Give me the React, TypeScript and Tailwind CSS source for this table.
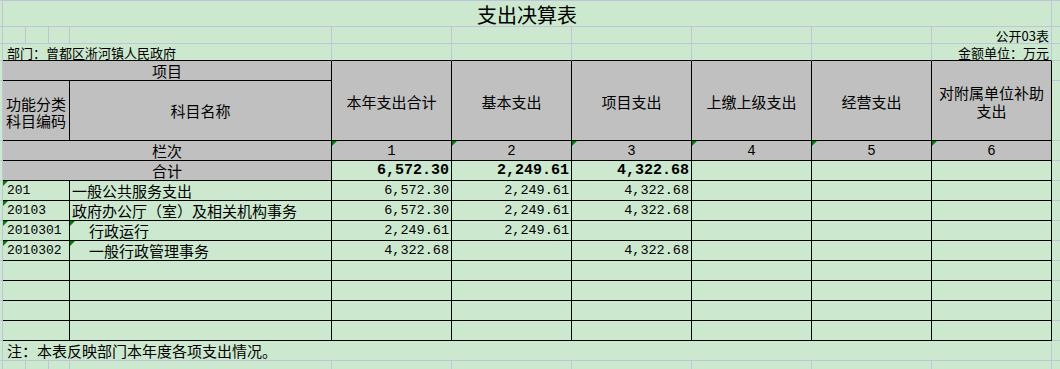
import * as React from "react"

type Row = {
  code: string
  name: string
  indent?: boolean
  vals: string[]
}

const rows: Row[] = [
  { code: "201", name: "一般公共服务支出", vals: ["6,572.30", "2,249.61", "4,322.68"] },
  { code: "20103", name: "政府办公厅（室）及相关机构事务", vals: ["6,572.30", "2,249.61", "4,322.68"] },
  { code: "2010301", name: "行政运行", indent: true, vals: ["2,249.61", "2,249.61", ""] },
  { code: "2010302", name: "一般行政管理事务", indent: true, vals: ["4,322.68", "", "4,322.68"] },
  { code: "", name: "", vals: [] },
  { code: "", name: "", vals: [] },
  { code: "", name: "", vals: [] },
  { code: "", name: "", vals: [] },
]

const headers = ["本年支出合计", "基本支出", "项目支出", "上缴上级支出", "经营支出"]

// little green "number stored as text" marker
function Flag() {
  return (
    <svg className="absolute left-0 top-0" width="5" height="5" viewBox="0 0 5 5">
      <polygon points="0,0 5,0 0,5" fill="#008000" />
    </svg>
  )
}

function GutterL() {
  return <div className="w-[3px] shrink-0 border-r border-b border-[#c0c4d8]" />
}

function GutterR() {
  return <div className="flex-1 border-b border-[#c0c4d8]" />
}

export default function App() {
  return (
    <div className="w-[1060px] h-[369px] overflow-hidden bg-[#cce8cf] border-t border-[#c0c4d8] text-black text-[15px] font-['Noto_Sans_CJK_SC',sans-serif]">
      {/* title */}
      <div className="flex h-[26px]">
        <GutterL />
        <div className="w-[1049px] shrink-0 border-r border-b border-[#c0c4d8] flex items-center justify-center pt-[3px] text-[20px] leading-[22px]">
          支出决算表
        </div>
        <GutterR />
      </div>

      {/* 公开03表 */}
      <div className="flex h-[17px]">
        <GutterL />
        <div className="w-[23px] shrink-0 border-r border-b border-[#c0c4d8]" />
        <div className="w-[23px] shrink-0 border-r border-b border-[#c0c4d8]" />
        <div className="w-[21px] shrink-0 border-r border-b border-[#c0c4d8]" />
        <div className="w-[262px] shrink-0 border-r border-b border-[#c0c4d8]" />
        {[0, 1, 2, 3, 4].map((i) => (
          <div key={i} className="w-[120px] shrink-0 border-r border-b border-[#c0c4d8]" />
        ))}
        <div className="w-[120px] shrink-0 border-r border-b border-[#c0c4d8] flex items-center justify-end pr-[2px] pt-[2px] text-[13px] leading-[14px]">
          公开03表
        </div>
        <GutterR />
      </div>

      {/* 部门 / 金额单位 */}
      <div className="flex h-[17px]">
        <GutterL />
        <div className="w-[329px] shrink-0 border-r border-b border-r-[#c0c4d8] border-b-black flex items-center pl-[4px] pt-[1px] text-[13px] leading-[14px]">
          部门：曾都区淅河镇人民政府
        </div>
        {[0, 1, 2, 3, 4].map((i) => (
          <div key={i} className="w-[120px] shrink-0 border-r border-b border-r-[#c0c4d8] border-b-black" />
        ))}
        <div className="w-[120px] shrink-0 border-r border-b border-r-[#c0c4d8] border-b-black flex items-center justify-end pr-[2px] pt-[1px] text-[13px] leading-[14px] whitespace-nowrap">
          金额单位：万元
        </div>
        <GutterR />
      </div>

      {/* header block */}
      <div className="flex h-[80px]">
        <div className="w-[3px] shrink-0 flex flex-col">
          <div className="h-[20px] border-r border-b border-[#c0c4d8]" />
          <div className="flex-1 border-r border-b border-[#c0c4d8]" />
        </div>
        <div className="w-[329px] shrink-0 flex flex-col bg-[#c0c0c0] border-r border-b border-black">
          <div className="h-[20px] border-b border-black flex items-center justify-center leading-[16px] pt-[1px]">项目</div>
          <div className="flex-1 flex">
            <div className="w-[67px] shrink-0 border-r border-black flex flex-col items-center justify-center leading-[17px] pt-[3px]">
              <span>功能分类</span>
              <span>科目编码</span>
            </div>
            <div className="flex-1 flex items-center justify-center pt-[2px]">科目名称</div>
          </div>
        </div>
        {headers.map((h) => (
          <div key={h} className="w-[120px] shrink-0 bg-[#c0c0c0] border-r border-b border-black flex items-center justify-center pt-[3px]">
            {h}
          </div>
        ))}
        <div className="w-[120px] shrink-0 bg-[#c0c0c0] border-r border-b border-black flex flex-col items-center justify-center leading-[18px] pt-[2px]">
          <span>对附属单位补助</span>
          <span>支出</span>
        </div>
        <div className="flex-1 flex flex-col">
          <div className="h-[20px] border-b border-[#c0c4d8]" />
          <div className="flex-1 border-b border-[#c0c4d8]" />
        </div>
      </div>

      {/* 栏次 */}
      <div className="flex h-[20px]">
        <GutterL />
        <div className="w-[329px] shrink-0 bg-[#c0c0c0] border-r border-b border-black flex items-center justify-center leading-[16px] pt-[1px]">栏次</div>
        {[1, 2, 3, 4, 5, 6].map((n) => (
          <div key={n} className="relative w-[120px] shrink-0 bg-[#c0c0c0] border-r border-b border-black flex items-center justify-center pt-[1px] font-['Liberation_Mono',monospace] text-[14px] leading-[16px]">
            <Flag />
            {n}
          </div>
        ))}
        <GutterR />
      </div>

      {/* 合计 */}
      <div className="flex h-[20px]">
        <GutterL />
        <div className="w-[329px] shrink-0 bg-[#c0c0c0] border-r border-b border-black flex items-center justify-center leading-[16px] pt-[1px]">合计</div>
        {["6,572.30", "2,249.61", "4,322.68", "", "", ""].map((v, i) => (
          <div key={i} className="w-[120px] shrink-0 border-r border-b border-black flex items-center justify-end pr-[2px] pt-[1px] font-['Liberation_Mono',monospace] font-bold text-[15px] leading-[16px]">
            {v}
          </div>
        ))}
        <GutterR />
      </div>

      {/* data rows */}
      {rows.map((r, idx) => (
        <div key={idx} className="flex h-[20px]">
          <GutterL />
          <div className="relative w-[67px] shrink-0 border-r border-b border-black flex items-center pl-[4px] pt-[1px] font-['Liberation_Mono',monospace] text-[13px] leading-[16px]">
            {r.code && <Flag />}
            {r.code}
          </div>
          <div className={`relative w-[262px] shrink-0 border-r border-b border-black flex items-center pt-[1px] leading-[16px] whitespace-nowrap ${r.indent ? "pl-[19px]" : "pl-[2px]"}`}>
            {r.indent && <Flag />}
            {r.name}
          </div>
          {[0, 1, 2, 3, 4, 5].map((i) => (
            <div key={i} className="w-[120px] shrink-0 border-r border-b border-black flex items-center justify-end pr-[2px] pt-[1px] font-['Liberation_Mono',monospace] text-[13.5px] leading-[16px]">
              {r.vals[i] ?? ""}
            </div>
          ))}
          <GutterR />
        </div>
      ))}

      {/* note */}
      <div className="flex h-[20px]">
        <GutterL />
        <div className="w-[1049px] shrink-0 border-r border-b border-[#c0c4d8] flex items-center pl-[4px] pt-[1px] leading-[16px]">
          注：本表反映部门本年度各项支出情况。
        </div>
        <GutterR />
      </div>

      {/* trailing empty row */}
      <div className="flex h-[8px]">
        <div className="w-[3px] shrink-0 border-r border-[#c0c4d8]" />
        <div className="w-[23px] shrink-0 border-r border-[#c0c4d8]" />
        <div className="w-[23px] shrink-0 border-r border-[#c0c4d8]" />
        <div className="w-[21px] shrink-0 border-r border-[#c0c4d8]" />
        <div className="w-[262px] shrink-0 border-r border-[#c0c4d8]" />
        {[0, 1, 2, 3, 4, 5].map((i) => (
          <div key={i} className="w-[120px] shrink-0 border-r border-[#c0c4d8]" />
        ))}
        <div className="flex-1" />
      </div>
    </div>
  )
}
